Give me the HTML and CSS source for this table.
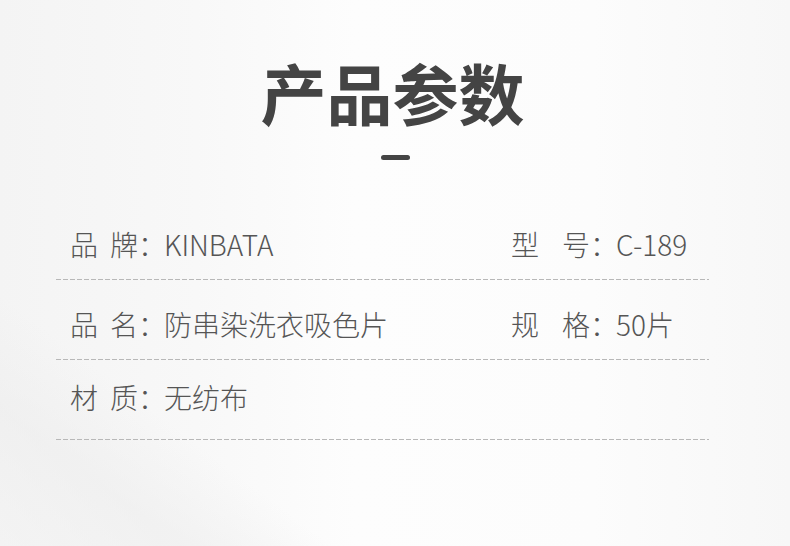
FILE: index.html
```html
<!DOCTYPE html>
<html lang="zh-CN">
<head>
<meta charset="utf-8">
<title>产品参数</title>
<link rel="stylesheet" href="styles.css">
</head>
<body>
<div class="page">
  <header class="head">
    <h1 class="title">产品参数</h1>
    <div class="dash"></div>
  </header>
  <section class="specs">
    <div class="row">
      <div class="cell"><span class="label"><i>品</i><i>牌</i></span><span class="colon">：</span><span class="value">KINBATA</span></div>
      <div class="cell right"><span class="label wide"><i>型</i><i>号</i></span><span class="colon">：</span><span class="value">C-189</span></div>
    </div>
    <div class="row">
      <div class="cell"><span class="label"><i>品</i><i>名</i></span><span class="colon">：</span><span class="value">防串染洗衣吸色片</span></div>
      <div class="cell right"><span class="label wide"><i>规</i><i>格</i></span><span class="colon">：</span><span class="value">50片</span></div>
    </div>
    <div class="row last">
      <div class="cell"><span class="label"><i>材</i><i>质</i></span><span class="colon">：</span><span class="value">无纺布</span></div>
    </div>
  </section>
</div>
</body>
</html>
```

FILE: styles.css
```css
html, body {
  margin: 0;
  padding: 0;
}
body {
  width: 790px;
  height: 546px;
  overflow: hidden;
  font-family: "Noto Sans CJK SC", "Noto Sans", sans-serif;
}
.page {
  width: 790px;
  height: 546px;
  box-sizing: border-box;
  background:
    linear-gradient(217deg, transparent 0 78%, rgba(236,236,236,0.55) 88%, rgba(242,242,242,0.45) 100%),
    linear-gradient(90deg, #f4f4f4 0, #f8f8f8 25%, #fdfdfd 45%, #fcfcfc 75%, #f7f7f7 100%);
  padding-top: 52px;
}
.head {
  display: flex;
  flex-direction: column;
  align-items: center;
  padding-right: 5px;
}
.title {
  margin: 0;
  font-size: 66px;
  line-height: 78px;
  font-weight: 700;
  color: #444;
}
.dash {
  width: 29px;
  height: 5px;
  border-radius: 3px;
  background: #444;
  margin: 25px 0 0 5px;
}
.specs {
  margin-top: 40px;
  margin-left: 56px;
  width: 653px;
}
.row {
  display: grid;
  grid-template-columns: 441px 1fr;
  align-items: start;
  padding-left: 14px;
  height: 80px;
  box-sizing: border-box;
  padding-top: 26px;
  background: repeating-linear-gradient(90deg, #b8b8b8 0 5px, transparent 5px 7px) left bottom / 100% 1px no-repeat;
}
.row.last {
  padding-top: 19px;
}
.cell {
  display: flex;
  align-items: center;
  font-size: 28px;
  line-height: 36px;
  color: #555;
  font-weight: 300;
}
.label {
  display: inline-flex;
  justify-content: space-between;
  width: 68px;
}
.label.wide {
  width: 79px;
}
.label i {
  font-style: normal;
}
.colon {
  width: 26px;
}
.value {
  white-space: nowrap;
}
```
